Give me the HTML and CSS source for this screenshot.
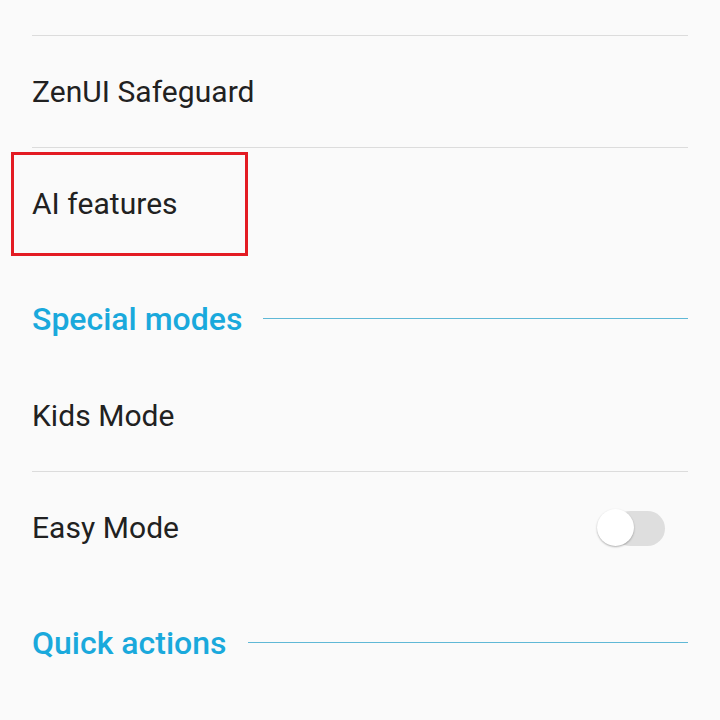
FILE: index.html
```html
<!DOCTYPE html>
<html>
<head>
<meta charset="utf-8">
<link rel="stylesheet" href="styles.css">
</head>
<body>
<div class="screen">
  <div class="divider first"></div>
  <div class="row"><span class="label">ZenUI Safeguard</span></div>
  <div class="divider"></div>
  <div class="row highlighted"><span class="label">AI features</span><div class="mark"></div></div>
  <div class="section"><span class="section-title">Special modes</span><span class="section-line"></span></div>
  <div class="row"><span class="label">Kids Mode</span></div>
  <div class="divider"></div>
  <div class="row"><span class="label">Easy Mode</span><div class="toggle"><div class="thumb"></div></div></div>
  <div class="section"><span class="section-title">Quick actions</span><span class="section-line"></span></div>
</div>
</body>
</html>
```
FILE: styles.css
```css
html, body {
  margin: 0;
  padding: 0;
  background: #fafafa;
}
.screen {
  width: 720px;
  height: 720px;
  overflow: hidden;
  font-family: Roboto, "Noto Sans", sans-serif;
  padding-top: 35px;
  box-sizing: border-box;
}
.divider {
  height: 1px;
  background: #dcdcdc;
  margin: 0 32px;
}
.row {
  position: relative;
  height: 111px;
  display: flex;
  align-items: center;
  padding: 0 32px;
}
.label {
  font-size: 30px;
  color: #212121;
  letter-spacing: 0.05px;
}
.mark {
  position: absolute;
  left: 11px;
  top: 4px;
  width: 231px;
  height: 98px;
  border: 3px solid #e31b23;
}
.section {
  height: 101px;
  display: flex;
  align-items: flex-start;
  padding: 42px 32px 0 32px;
  box-sizing: border-box;
  gap: 21px;
}
.section-title {
  font-size: 32px;
  font-weight: 500;
  color: #1aa9dc;
  line-height: 36px;
}
.section-line {
  flex: 1;
  height: 1px;
  background: #5fb8d6;
  margin-top: 17px;
}
.toggle {
  position: absolute;
  right: 55px;
  top: 39px;
  width: 52px;
  height: 35px;
  border-radius: 18px;
  background: #dedede;
}
.thumb {
  position: absolute;
  left: -16px;
  top: -2px;
  width: 37px;
  height: 37px;
  border-radius: 50%;
  background: #ffffff;
  box-shadow: 0 1px 2px rgba(0,0,0,0.3);
}
```
